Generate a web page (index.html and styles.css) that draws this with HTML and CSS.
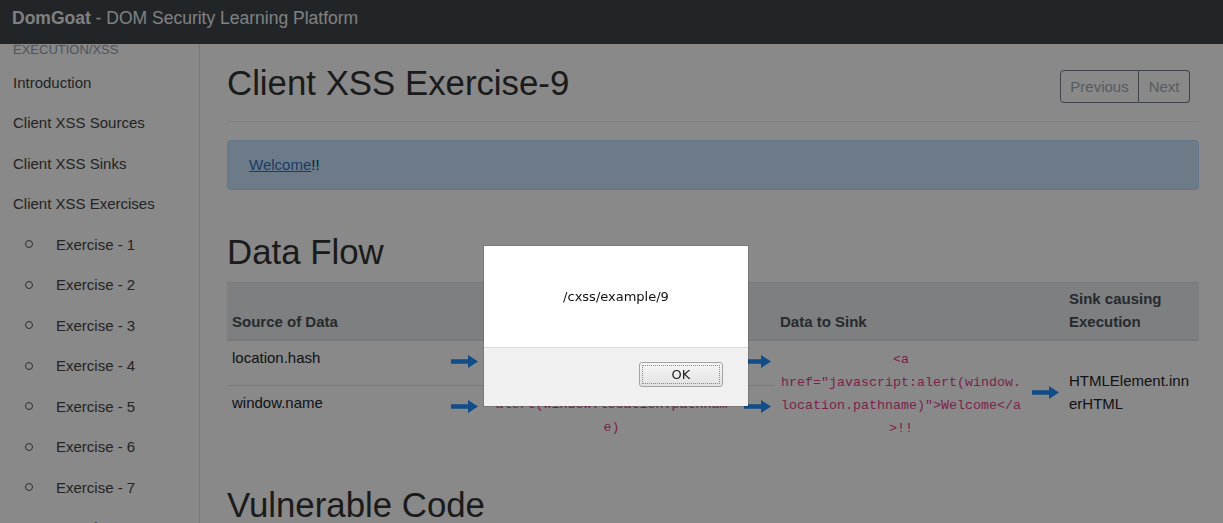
FILE: index.html
```html
<!DOCTYPE html>
<html lang="en">
<head>
<meta charset="utf-8">
<title>DomGoat - Client XSS Exercise-9</title>
<link rel="stylesheet" href="styles.css">
</head>
<body>
<header class="navbar">
  <span class="brand"><b>DomGoat</b> - DOM Security Learning Platform</span>
</header>
<div class="layout">
  <aside class="sidebar">
    <div class="side-head">Execution/XSS</div>
    <ul class="side-nav">
      <li><a class="nav-link" href="#">Introduction</a></li>
      <li><a class="nav-link" href="#">Client XSS Sources</a></li>
      <li><a class="nav-link" href="#">Client XSS Sinks</a></li>
      <li><a class="nav-link" href="#">Client XSS Exercises</a>
        <ul class="sub-nav">
          <li><a class="nav-link" href="#">Exercise - 1</a></li>
          <li><a class="nav-link" href="#">Exercise - 2</a></li>
          <li><a class="nav-link" href="#">Exercise - 3</a></li>
          <li><a class="nav-link" href="#">Exercise - 4</a></li>
          <li><a class="nav-link" href="#">Exercise - 5</a></li>
          <li><a class="nav-link" href="#">Exercise - 6</a></li>
          <li><a class="nav-link" href="#">Exercise - 7</a></li>
          <li><a class="nav-link" href="#">Exercise - 8</a></li>
          <li><a class="nav-link" href="#">Exercise - 9</a></li>
        </ul>
      </li>
    </ul>
  </aside>
  <main class="main">
    <div class="page-head">
      <h1 class="title">Client XSS Exercise-9</h1>
      <div class="pager">
        <a class="pager-btn" href="#">Previous</a><a class="pager-btn" href="#">Next</a>
      </div>
    </div>
    <div class="alert"><a class="alert-link" href="#">Welcome</a>!!</div>

    <h2 class="section-title">Data Flow</h2>
    <table class="flow">
      <colgroup>
        <col class="w-src"><col class="w-arrow1"><col class="w-mid"><col class="w-arrow2"><col class="w-data"><col class="w-arrow3"><col class="w-sink">
      </colgroup>
      <thead>
        <tr>
          <th>Source of Data</th>
          <th></th>
          <th class="mid">Data from Source</th>
          <th></th>
          <th>Data to Sink</th>
          <th></th>
          <th>Sink causing Execution</th>
        </tr>
      </thead>
      <tbody>
        <tr class="row-first">
          <td>location.hash</td>
          <td class="arrow"><svg class="arr" viewBox="0 0 27 13" width="27" height="13"><path d="M0 4.2H17V0L27 6.5L17 13V8.8H0Z"/></svg></td>
          <td class="mid"><code>location.hash</code></td>
          <td class="arrow"><svg class="arr" viewBox="0 0 27 13" width="27" height="13"><path d="M0 4.2H17V0L27 6.5L17 13V8.8H0Z"/></svg></td>
          <td class="data" rowspan="2"><code>&lt;a href="javascript:alert(window.location.pathname)"&gt;Welcome&lt;/a&gt;!!</code></td>
          <td class="arrow arrow-mid" rowspan="2"><svg class="arr" viewBox="0 0 27 13" width="27" height="13"><path d="M0 4.2H17V0L27 6.5L17 13V8.8H0Z"/></svg></td>
          <td class="sink" rowspan="2">HTMLElement.innerHTML</td>
        </tr>
        <tr class="row-second">
          <td>window.name</td>
          <td class="arrow"><svg class="arr" viewBox="0 0 27 13" width="27" height="13"><path d="M0 4.2H17V0L27 6.5L17 13V8.8H0Z"/></svg></td>
          <td class="mid"><code>alert(window.location.pathname)</code></td>
          <td class="arrow"><svg class="arr" viewBox="0 0 27 13" width="27" height="13"><path d="M0 4.2H17V0L27 6.5L17 13V8.8H0Z"/></svg></td>
        </tr>
      </tbody>
    </table>

    <h2 class="section-title">Vulnerable Code</h2>
  </main>
</div>

<div class="overlay"></div>
<div class="dialog" role="alertdialog">
  <div class="dialog-body">/cxss/example/9</div>
  <div class="dialog-foot"><button class="ok-btn" type="button">OK</button></div>
</div>
</body>
</html>
```

FILE: styles.css
```css
* { box-sizing: border-box; }

html, body {
  margin: 0;
  height: 100%;
  overflow: hidden;
}

body {
  font-family: "Liberation Sans", Arial, sans-serif;
  font-size: 15px;
  color: #212529;
  background: #ffffff;
  display: flex;
  flex-direction: column;
}

/* ---------- top bar ---------- */
.navbar {
  flex: 0 0 44px;
  background: #3e454c;
  color: #ffffff;
  padding: 8px 12px 0;
}
.brand {
  font-size: 17.5px;
  line-height: 20px;
  color: #eceef0;
}
.brand b { font-weight: bold; }

/* ---------- layout ---------- */
.layout {
  flex: 1;
  display: flex;
  min-height: 0;
}

.sidebar {
  flex: 0 0 200px;
  border-right: 1px solid #dddddd;
  overflow: hidden;
}
.side-head {
  font-size: 13px;
  line-height: 12px;
  text-transform: uppercase;
  color: #939daa;
  padding-left: 13px;
  margin-bottom: 6px;
}
.side-nav, .sub-nav {
  list-style: none;
  margin: 0;
  padding: 0;
}
.nav-link {
  display: block;
  padding: 9.75px 13px;
  line-height: 21px;
  font-size: 15px;
  color: #444444;
  text-decoration: none;
  white-space: nowrap;
}
.sub-nav li {
  display: flex;
  align-items: center;
}
.sub-nav li::before {
  content: "";
  flex: 0 0 auto;
  width: 6px;
  height: 6px;
  border: 1.1px solid #555555;
  border-radius: 50%;
  margin-left: 25px;
}
.sub-nav .nav-link { padding-left: 23px; }

/* ---------- main ---------- */
.main {
  flex: 1;
  min-width: 0;
  padding: 0 24px 0 27px;
  overflow: hidden;
}

.page-head {
  display: flex;
  justify-content: space-between;
  align-items: flex-start;
  padding: 20px 0 18px;
  border-bottom: 1px solid #eeeeee;
}
.title, .section-title {
  font-size: 34.8px;
  font-weight: normal;
  color: #333333;
  margin: 0;
}
.title { line-height: 38px; }

.pager {
  display: flex;
  margin: 6px 9px 0 0;
}
.pager-btn {
  display: block;
  font-size: 15px;
  line-height: 21px;
  padding: 5px 9.5px;
  border: 1px solid #767e88;
  color: #a3abb4;
  text-decoration: none;
}
.pager-btn:first-child { border-radius: 4px 0 0 4px; }
.pager-btn:last-child { border-left: 0; border-radius: 0 4px 4px 0; }

.alert {
  margin-top: 18px;
  padding: 14px 21px;
  line-height: 20px;
  border: 1px solid #b8daff;
  border-radius: 4px;
  background: #cce5ff;
  color: #004085;
}
.alert-link {
  color: #2f73c4;
  text-decoration: underline;
}

.section-title {
  line-height: 38.5px;
  margin: 42.6px 0 11px;
}

/* ---------- data flow table ---------- */
.flow {
  width: 100%;
  table-layout: fixed;
  border-collapse: separate;
  border-spacing: 0;
}
.w-src { width: 219px; }
.w-arrow1 { width: 37px; }
.w-mid { width: 257px; }
.w-arrow2 { width: 35px; }
.w-data { width: 252px; }
.w-arrow3 { width: 37px; }
.w-sink { width: 135px; }

.flow th {
  background: #e9ecef;
  border-top: 1px solid #dee2e6;
  border-bottom: 2px solid #dee2e6;
  padding: 4px 5px 6px;
  line-height: 23px;
  text-align: left;
  vertical-align: bottom;
  font-weight: bold;
  color: #495057;
}
.flow th.mid { padding: 4px 10px 6px; }
.flow td {
  padding: 5px;
  line-height: 23px;
  vertical-align: top;
  color: #212529;
}
.row-first { height: 44px; }
.row-second td { border-top: 1px solid #dee2e6; }

.flow td.mid {
  padding: 5px 10px;
  text-align: center;
}
.flow td.data { text-align: center; }
.flow td.sink {
  vertical-align: middle;
  word-break: break-all;
}
.flow td.arrow {
  padding: 14px 0 0;
  text-align: center;
  line-height: 0;
}
.flow td.arrow-mid {
  padding: 0;
  vertical-align: middle;
}
.arr {
  display: inline-block;
  fill: #1e90ff;
}

code {
  font-family: "Liberation Mono", "Courier New", monospace;
  font-size: 13.33px;
  line-height: 1;
  color: #e83e8c;
  overflow-wrap: anywhere;
}

/* ---------- modal alert ---------- */
.overlay {
  position: fixed;
  inset: 0;
  background: rgba(0, 0, 0, 0.463);
}
.dialog {
  position: fixed;
  left: 484px;
  top: 246px;
  width: 264px;
  height: 160px;
  display: flex;
  flex-direction: column;
  background: #ffffff;
  box-shadow: 0 0 0 1px rgba(0, 0, 0, 0.12);
  font-family: "DejaVu Sans", sans-serif;
  font-size: 13px;
  color: #111111;
}
.dialog-body {
  flex: 0 0 101px;
  display: flex;
  align-items: center;
  justify-content: center;
}
.dialog-foot {
  flex: 1;
  background: #f0f0f0;
  border-top: 1px solid #dcdcdc;
  display: flex;
  justify-content: flex-end;
  align-items: flex-start;
  padding: 14px 25px 0 0;
}
.ok-btn {
  width: 84px;
  height: 25px;
  font-family: "DejaVu Sans", sans-serif;
  font-size: 13px;
  color: #1a1a1a;
  border: 1px solid #a3a3a3;
  border-radius: 3px;
  background: linear-gradient(#f6f6f6, #e2e2e2);
  outline: 1px dotted #8a8a8a;
  outline-offset: -4px;
  padding: 0;
}
```
